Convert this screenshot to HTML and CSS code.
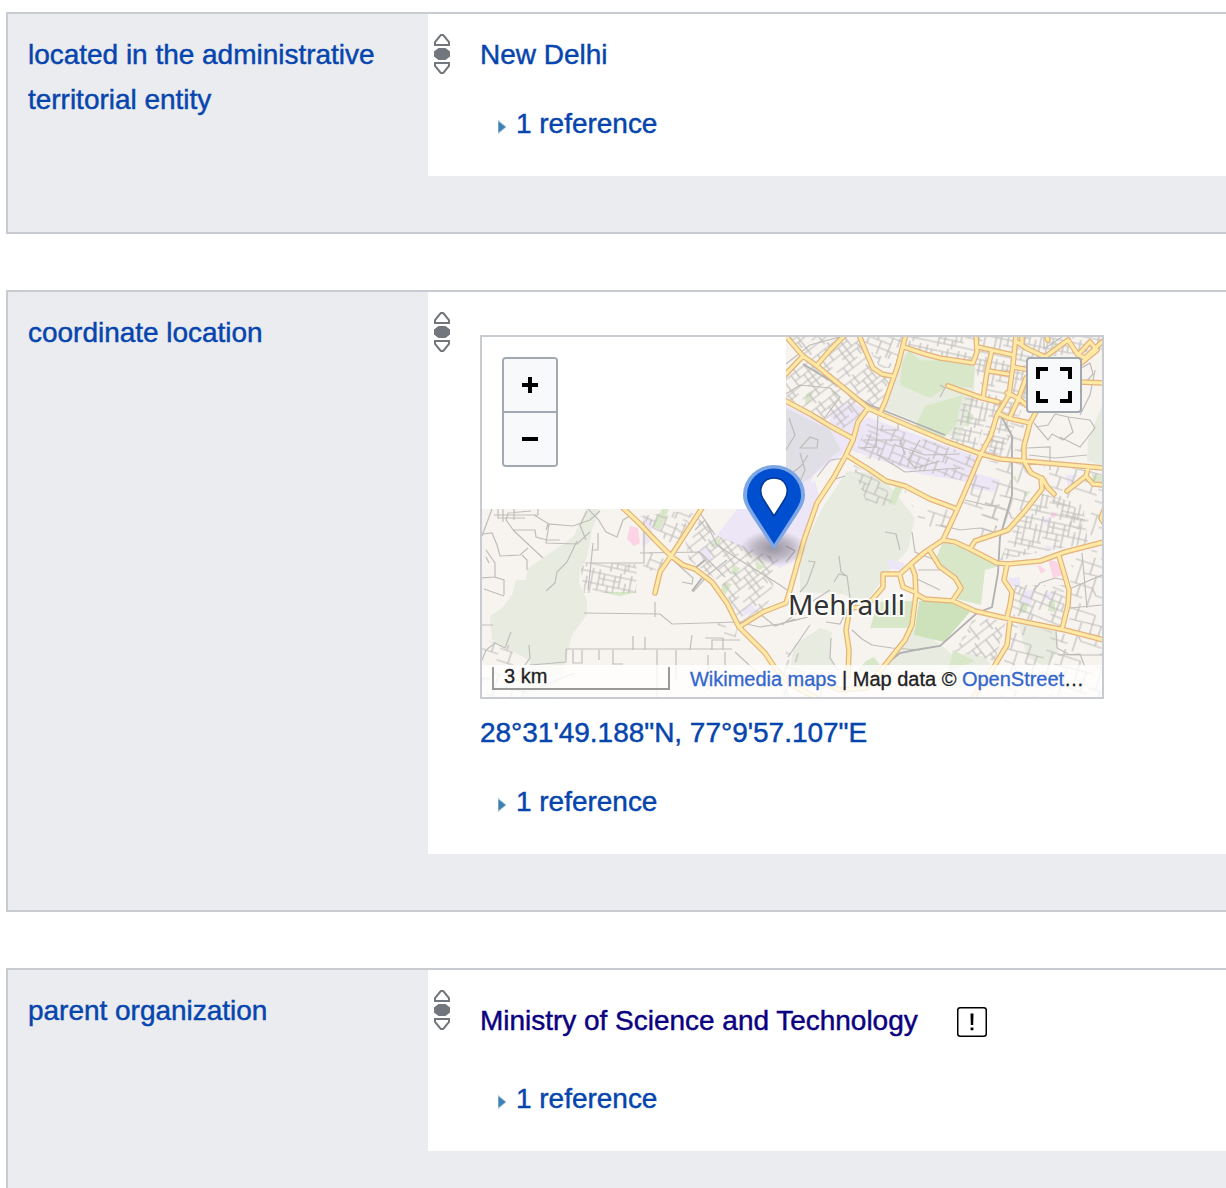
FILE: index.html
```html
<!DOCTYPE html>
<html lang="en">
<head>
<meta charset="utf-8">
<title>Statements</title>
<link rel="stylesheet" href="styles.css">
</head>
<body>
<svg class="sprite" aria-hidden="true">
  <symbol id="rank" viewBox="0 0 16 40">
    <path d="M1 11V8L6 2L7 1H9L10 2L15 8V11ZM1 29V32L6 38L7 39H9L10 38L15 32V29Z" fill="none" stroke="#72777d" stroke-width="2"/>
    <path d="M4.500 14h7L16 17.500v5L11.500 26h-7L0 22.500v-5Z" fill="#72777d"/>
  </symbol>
  <symbol id="toggle" viewBox="0 0 10 16">
    <path d="M1 .8L9.500 8L1 15.200Z" fill="#a9cbe0"/>
    <path d="M1.500 2.500L8.500 8L1.500 13.500Z" fill="#3e80b3"/>
  </symbol>
</svg>
<main class="statements">
  <section class="group">
    <div class="property"><a href="#">located in the administrative territorial entity</a></div>
    <div class="statement">
      <svg class="rank"><use href="#rank"/></svg>
      <div class="value">
        <div class="snak"><a href="#">New Delhi</a></div>
        <div class="references"><svg class="toggle"><use href="#toggle"/></svg><a href="#">1 reference</a></div>
      </div>
    </div>
  </section>

  <section class="group">
    <div class="property"><a href="#">coordinate location</a></div>
    <div class="statement">
      <svg class="rank"><use href="#rank"/></svg>
      <div class="value with-map">
        <div class="map">
          <svg class="tiles" viewBox="482 337 620 360" width="620" height="360">
            <defs>
              <pattern id="s1" width="46" height="38" patternUnits="userSpaceOnUse" patternTransform="rotate(22)">
                <path d="M0 3H30M30 9H46M0 10H21M0 17H46M8 24H35M0 31H46M4 0V17M12 3V31M21 0V24M30 0V17M35 17V38M42 3V24M17 10V17M25 24V38M0 36H12M38 31V38"/>
              </pattern>
              <pattern id="s2" width="43" height="41" patternUnits="userSpaceOnUse" patternTransform="rotate(-38)">
                <path d="M0 4H43M5 11H28M0 18H43M12 23H43M0 30H26M0 36H43M5 4V18M11 0V11M16 11V36M22 4V30M28 0V18M34 18V41M39 4V23M8 30V41M31 23V30"/>
              </pattern>
              <pattern id="s3" width="39" height="36" patternUnits="userSpaceOnUse" patternTransform="rotate(12)">
                <path d="M0 4H39M4 9H25M0 15H39M0 21H18M14 27H39M0 32H39M4 0V21M9 4V15M14 15V36M20 4V32M25 0V15M31 9V32M36 0V27M28 27V36"/>
              </pattern>
              <pattern id="s4" width="52" height="48" patternUnits="userSpaceOnUse" patternTransform="rotate(18)">
                <path d="M0 7H36M12 18L52 15M0 30H25L30 36H52M0 42H18M7 7V30M18 0V18M25 18V48M36 7V26M45 15V36M12 30V42M36 26H45"/>
              </pattern>
              <radialGradient id="shadow"><stop offset="0" stop-color="#000" stop-opacity=".36"/><stop offset=".55" stop-color="#000" stop-opacity=".2"/><stop offset="1" stop-color="#000" stop-opacity="0"/></radialGradient>
              <clipPath id="land"><path d="M786 337H1102V697H482V509H786Z"/></clipPath>
            </defs>
            <g clip-path="url(#land)">
              <path d="M482 337H1102V697H482Z" fill="#f7f4f0"/>
              <!-- scrub and woodland -->
              <g fill="#e8ece0">
                <path d="M586 509H600L592 530L587 558L580 568L579 583L587 600V615L572 635L565 663L558 697H525L530 661L492 640L490 616L502 608L512 595L516 580H526L527 569L553 551L574 536Z"/>
                <path d="M847 471L870 473L888 484L915 518L908 550L890 569L869 598L855 600L843 594L800 592L800 555L821 510Z"/>
                <path d="M905 352L940 360L975 366L974 400L960 440L880 407Z"/>
                <path d="M1102 405L1088 440L1087 461L1102 465Z"/>
                <path d="M1018 622L1056 632L1059 650L1045 667L1027 657Z"/>
                <path d="M794 645L820 628L832 632L830 655L838 670H790Z"/>
                <path d="M911 627L940 644L963 664L940 670H885Z"/>
                <path d="M965 652L985 657L1000 677L945 690Z"/>
              </g>
              <g fill="#ede6f7">
                <path d="M737 509H786L815 480L820 500L798 560L780 568L735 545L717 535Z"/>
                <path d="M786 405L830 427L850 440L842 455L814 475L800 510L786 497Z"/>
                <path d="M831 411L850 402L866 408L852 435L830 425Z"/>
                <path d="M868 417L980 458L968 482L920 474L850 450L858 425Z"/>
                <path d="M976 473L1000 480L993 492L968 488Z"/>
                <path d="M643 514L652 520V540L642 548ZM702 547L710 550L712 562L702 560ZM742 609L752 604L756 611L744 616ZM1008 578L1020 577L1020 587L1009 585ZM1025 591L1035 589L1031 606L1022 602ZM1045 593L1055 591L1053 600L1044 599ZM1042 520L1050 517L1048 527ZM1045 545L1054 547L1048 552ZM887 559L904 563V571L889 568ZM1066 475L1078 475L1068 487Z"/>
              </g>
              <path d="M786 408L830 430L841 450L830 458L808 480L786 490Z" fill="#dfdfe5"/>
              <!-- parks -->
              <g fill="#d8e7c8">
                <path d="M909 350L920 360L940 361L975 366L973 388L950 385L930 398L900 385L902 363Z"/>
                <path d="M925 406L963 395L956 425L944 438L915 427Z"/>
                <path d="M943 542L970 550L1000 566L985 570L981 605L953 598L960 587L935 560Z"/>
                <path d="M878 602L912 601V628L870 628Z"/>
                <path d="M662 509H669L660 530L652 526ZM715 540L722 537L719 545L710 547ZM733 565L740 568L735 576L731 573ZM724 582L732 584L725 595L721 589ZM755 561L765 567L757 571ZM806 394L813 390L811 401L805 405ZM895 487L903 487L895 505L888 504ZM1055 341L1059 346L1052 350ZM1049 601L1055 601V612L1048 611ZM1020 602L1029 603L1026 613L1019 613ZM866 661L874 657L885 672H855ZM953 650L975 661L948 672ZM1092 474L1102 476V482L1092 481ZM600 592L637 592L620 596ZM968 411L974 416L968 427L965 425ZM1015 475L1018 485L1013 478ZM1023 492L1031 491L1026 497Z"/>
              </g>
              <path d="M919 601L945 600L970 612L944 642L914 635Z" fill="#cde2bb"/>
              <path d="M630 526L638 528L640 543L634 546L627 539ZM1048 559L1057 562L1062 575L1053 578ZM1037 564L1046 570L1041 574ZM1052 512L1058 513L1054 518L1050 517Z" fill="#fbd4e6"/>
              <!-- dense street grids -->
              <g class="streets">
                <path fill="url(#s2)" d="M786 337H860L873 368L892 376L880 411L817 366ZM786 376L803 358L866 408L850 432L786 398Z"/>
                <path fill="url(#s1)" d="M862 337H904L897 368H880ZM868 420L980 458L968 482L855 455ZM852 463L885 485L895 510L865 500Z"/>
                <path fill="url(#s3)" d="M908 337H1102V350L1045 357L1026 400L1000 459L978 452L990 410L973 363L908 347ZM965 396L992 402L975 452L950 440ZM580 562L637 564L636 593H584Z"/>
                <path fill="url(#s4)" d="M978 460L1024 463L1042 480L1024 510L1000 530L958 510ZM904 490L957 512L943 537L918 517ZM998 412L1024 425L1022 459L988 455Z"/>
                <path fill="url(#s3)" d="M1040 493L1083 505L1088 543L1000 560L1014 527Z"/>
                <path fill="url(#s1)" d="M1012 585L1067 585L1062 628L1012 616ZM640 516L694 510L675 549ZM660 570L640 571L650 552L666 560Z"/>
                <path fill="url(#s2)" d="M690 511L720 537L780 560L766 611L740 622L720 582L689 560L685 540ZM975 616L1006 622L995 661L955 651Z"/>
                <path fill="url(#s4)" d="M1008 623L1102 641V697H1000ZM482 640L510 645L530 697H482ZM717 623L738 625L735 642L722 640ZM786 650L815 658L830 697H782ZM1072 555L1102 548V638L1068 628Z"/>
                <path fill="url(#s4)" d="M1044 466L1102 470V540L1068 525L1050 497ZM985 500H1008L1000 530L980 537Z"/>
              </g>
              <!-- lanes -->
              <g class="lanes">
                <path d="M482 536L492 509M494 515H538V509M498 509V518H525M503 509V522M514 509V520M531 511L508 513L506 520L514 531L543 558M513 530H535L536 537L547 540H560M546 530L548 524L573 526L590 520L600 511M534 515L549 524L546 543L577 544L590 532M577 541L567 562L557 572L555 583L546 591M587 511L580 525L586 540M482 534L492 533L497 545L500 556L520 555L528 548M486 550L495 563V577L504 580V595M486 557L489 563M495 577L480 578M484 589L504 596M522 555L527 560V570"/>
                <path d="M588 509L598 519L606 532L617 537L623 520L630 516L624 509M591 563H644V521M593 543L591 563L588 590M598 533V550H592M584 613L660 614L672 624L737 622L760 627L779 624L800 619M511 632L505 648L495 643L486 650L482 660M529 645L530 658L525 665M482 625L493 625M566 649H732M566 649V662L530 665M582 650V663H573V650M599 650V660M613 650V664H623M633 636V650M645 637V650M657 650V697M676 650V680M692 635L690 650M705 638H723V650M712 650V640H740M725 652V665M708 655V690M735 652L760 675M540 687L575 673"/>
                <path d="M640 553L700 552L725 577M693 592L708 575L727 560M695 530L705 520L717 545L735 557L780 585L787 590M700 513L715 535M682 582L692 584L693 578L675 562M655 602V617M739 623L760 614L775 626L795 619M782 625L805 606L830 590M786 546L795 551L786 562M808 561L815 562L807 584L800 592M839 556L841 572L847 576L850 598M834 582L839 574L847 576M780 624L808 617M788 657L810 625M826 622L840 624L848 608M852 630L862 639L872 645L892 648L920 650M831 638L830 658L838 670"/>
                <path d="M786 364L810 345L840 337M786 394L800 385L830 388L840 397L823 420M786 450L795 435L789 418M800 448L810 437L818 440L817 448ZM790 475L802 465L808 455M799 484L805 470L800 453M817 477L830 460L847 458M820 500L832 480L845 476M864 440H900L905 455M878 416L876 447L860 448M895 445L925 455L960 454M880 430H898V420M920 440L908 460L915 468L940 461M878 455L905 472L960 468"/>
                <path d="M940 385L945 388L940 397M1036 427L1048 425L1055 414M1055 414L1068 417L1073 432L1063 440L1052 434L1048 440L1034 423M1068 417L1090 420L1095 428L1080 447L1060 437M1080 415L1090 395L1095 370M1029 455L1055 458L1087 455M1027 448L1050 447V470M1044 337V349L1062 337M1078 370L1090 363L1093 374L1085 383"/>
                <path d="M912 532L915 552L935 560M918 570L940 570M917 579L940 590M940 525L960 530L980 528L1000 534M1034 590L1040 583L1055 578L1065 580M1067 590L1102 575M1070 608L1102 605M1082 553L1087 608M1056 630L1057 648L1070 655H1102M1058 655L1080 654L1085 667M885 532L896 534L900 550M965 500L990 506L1000 505"/>
              </g>
              <path class="rail" d="M803 364L870 405L945 435M998 410L1012 436V495L1000 537L998 573L992 607L977 613L940 646L915 650L900 653L885 665M693 570L705 560M692 591L702 578"/>
              <g class="road-case">
                <path id="r" d="M784 334L803 356L817 366L868 408L881 414L945 441L981 454L1000 459L1024 461L1104 468M784 376L803 356M784 400L812 415L830 426L852 438M818 364L830 350L845 335M859 335L866 352L873 368L882 374L892 376M906 334L898 365L890 388L885 402L880 413M904 347L925 354L940 358L973 363L977 352L976 335M868 408L858 422L853 440L846 455L834 477L817 503L804 540L790 590L786 603L763 612L739 627M846 455L870 470L886 481L905 486L930 499L957 509M1016 335L1013 365L1009 395L997 415L991 435L981 454L970 480L957 510L943 540M978 347L1013 355M992 350L987 372L983 398M989 371L1008 374M948 386L982 398L998 402M1013 367L1030 370M1007 393L1018 398L1030 408M1026 378L1018 400L1010 417M998 413L1008 418L1030 423L1037 410M1030 423L1024 446V461M1016 341L1026 348L1045 357L1068 340L1078 355L1085 358L1104 340M1078 355L1090 342L1097 350L1080 364M1022 335V343M1078 382L1104 383M1024 461L1031 473L1041 478L1042 489L1024 512L1008 530L975 541L970 549M1042 478L1048 488L1054 494M1067 491L1086 476L1088 468M1086 476L1093 484L1104 485M943 540L955 542L970 549L997 563L1008 564L1040 561L1065 552L1104 542M1007 565L1004 580L1012 592L1010 605L1007 617M1059 556L1069 590L1068 605L1062 629M916 594L925 599L953 601L975 611L1005 618L1040 625L1065 630L1104 640M953 600L961 588L955 578L940 567L930 551M1010 620L1007 645L995 665L980 687L972 700M943 540L925 552L912 563L900 574H883V587L872 600L862 607L850 608M912 567L915 575L916 594M900 576L903 587L915 592M916 594L912 625L905 640L885 665L866 688L840 690L815 680M850 608L846 630L849 650L848 676M1046 335L1048 340M622 507L640 524L655 540L671 556L683 565L695 569L712 582L727 603L739 627L765 653L775 668L790 684L815 697M702 508L671 556L660 572L655 593M1104 510L1101 518L1104 523"/>
              </g>
              <use href="#r" class="road-fill"/>
            </g>
            <text x="788" y="615" class="place" textLength="117">Mehrauli</text>
            <ellipse cx="773" cy="548" rx="33" ry="18" fill="url(#shadow)"/>
            <path d="M774 550L751 515C746 507 743 502 743 495A31 30 0 0 1 805 495C805 502 802 507 797 515Z" fill="#7da6e4"/>
            <path d="M774 544L754 513C749 505 747 501 747 495A27 26.500 0 0 1 801 495C801 501 799 505 794 513Z" fill="#004fd1"/>
            <path d="M774 516L763.500 499.500C757 489 763 478 774 478S791 489 784.500 499.500Z" fill="#fff" stroke="#003893" stroke-width="1.500"/>
          </svg>
          <div class="zoom">
            <button type="button" aria-label="Zoom in"><svg width="16" height="16"><path d="M0 8H16M8 0V16" stroke="#000" stroke-width="4"/></svg></button>
            <button type="button" aria-label="Zoom out"><svg width="16" height="16"><path d="M0 8H16" stroke="#000" stroke-width="4"/></svg></button>
          </div>
          <button type="button" class="fullscreen" aria-label="Full screen"><svg width="36" height="36"><path d="M2 12V2H12M24 2H34V12M34 24V34H24M12 34H2V24" fill="none" stroke="#000" stroke-width="4"/></svg></button>
          <div class="footer">
            <div class="scale">3 km</div>
            <div class="credit"><a href="#">Wikimedia maps</a> | Map data © <a href="#">OpenStreet</a>…</div>
          </div>
        </div>
        <div class="snak"><a href="#" class="coords">28°31'49.188"N, 77°9'57.107"E</a></div>
        <div class="references"><svg class="toggle"><use href="#toggle"/></svg><a href="#">1 reference</a></div>
      </div>
    </div>
  </section>

  <section class="group">
    <div class="property"><a href="#">parent organization</a></div>
    <div class="statement">
      <svg class="rank"><use href="#rank"/></svg>
      <div class="value flagged">
        <div class="snak"><a href="#" class="visited">Ministry of Science and Technology</a>
          <svg class="issue" width="30" height="30" viewBox="0 0 30 30"><rect x=".75" y=".75" width="28.500" height="28.500" rx="2.500" fill="#fff" stroke="#000" stroke-width="1.500"/><path d="M13.500 6.500h3l-.3 11.500h-2.400ZM13.600 20.500h2.800v2.700h-2.800Z"/></svg>
        </div>
        <div class="references"><svg class="toggle"><use href="#toggle"/></svg><a href="#">1 reference</a></div>
      </div>
    </div>
  </section>
</main>
</body>
</html>
```

FILE: styles.css
```css
* { box-sizing: border-box; }
body {
  margin: 0;
  height: 100vh;
  overflow: hidden;
  background: #fff;
  color: #202122;
  font: 28px/45px "Liberation Sans", Arial, sans-serif;
}
a { color: #0645ad; text-decoration: none; }
a.visited { color: #0b0080; }
.sprite { display: none; }

.statements {
  display: flex;
  flex-direction: column;
  gap: 56px;
  padding: 12px 0 0 6px;
}
.group {
  display: grid;
  grid-template-columns: 420px 1fr;
  border: 2px solid #c8ccd1;
  border-right: 0;
  padding-bottom: 56px;
  background: #eaecf0;
}
.property { padding: 18px 20px 0; }
.property a, .value a { -webkit-text-stroke: .45px; letter-spacing: -.02px; }
.statement {
  display: flex;
  background: #fff;
  padding: 0 0 30px 6px;
}
.rank { width: 16px; height: 40px; margin: 20px 30px 0 0; flex: none; }
.value { padding-top: 18px; }
.value.with-map { padding-top: 43px; }
.value.flagged { padding-top: 28px; }
.snak { display: flex; align-items: center; }
.references {
  display: flex;
  align-items: center;
  margin-top: 24px;
  padding-left: 17px;
}
.flagged .references { margin-top: 33px; }
.toggle { width: 10px; height: 16px; margin: 6px 9px 0 0; }
.issue { margin: 3px 0 0 39px; }

.map {
  position: relative;
  width: 624px;
  height: 364px;
  border: 2px solid #c8ccd1;
  margin-bottom: 11px;
  overflow: hidden;
}
.tiles { display: block; }
pattern path, .lanes {
  fill: none;
  stroke: #bfbdba;
  stroke-width: 1.2;
}
.rail { fill: none; stroke: #b0b0b0; stroke-width: 1.8; }
.road-case, .road-fill { fill: none; stroke-linejoin: round; stroke-linecap: round; }
.road-case { stroke: #e2b37c; stroke-width: 5.6; }
.road-fill { stroke: #ffe9a5; stroke-width: 3.2; }
.place {
  font: 28px "Noto Sans", "Open Sans", sans-serif;
  fill: #333;
  stroke: #fff;
  stroke-opacity: .85;
  stroke-width: 4px;
  paint-order: stroke;
}
.zoom {
  position: absolute;
  top: 20px;
  left: 20px;
  width: 56px;
  border: 2px solid #a2a9b1;
  border-radius: 4px;
  overflow: hidden;
}
button {
  display: grid;
  place-items: center;
  padding: 0;
  border: 0;
  background: #f8f9fa;
}
.zoom button { width: 52px; height: 52px; }
.zoom button + button { height: 54px; border-top: 2px solid #a2a9b1; }
.fullscreen {
  position: absolute;
  top: 20px;
  right: 20px;
  width: 56px;
  height: 56px;
  border: 2px solid #a2a9b1;
  border-radius: 4px;
}
.footer {
  position: absolute;
  inset: auto 0 0;
  display: flex;
  height: 32px;
  padding-left: 10px;
  background: rgba(255, 255, 255, .8);
  font-size: 20px;
  line-height: 28px;
  white-space: nowrap;
}
.scale, .credit { -webkit-text-stroke: .3px; }
.scale {
  width: 178px;
  height: 23px;
  margin: 2px 20px 0 0;
  padding-left: 10px;
  border: solid #999;
  border-width: 0 2px 2px;
  line-height: 19px;
  color: #202122;
}
.credit a { color: #36c; -webkit-text-stroke: .3px; }
```
